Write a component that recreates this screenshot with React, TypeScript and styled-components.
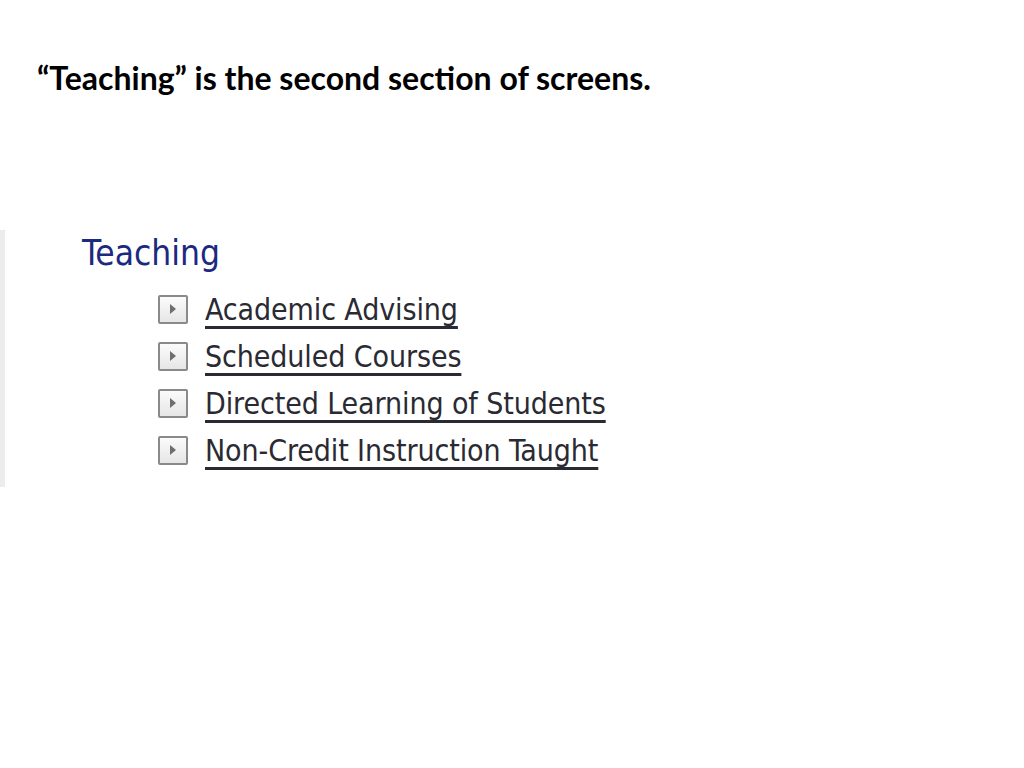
import styled, { createGlobalStyle } from "styled-components";

const GlobalStyle = createGlobalStyle`
  body {
    margin: 0;
    background: #ffffff;
  }
`;

const Page = styled.div`
  width: 1024px;
  height: 768px;
  display: flex;
  flex-direction: column;
`;

const Caption = styled.h1`
  margin: 0;
  padding: 58px 0 0 37px;
  font-family: Lato, "Liberation Sans", sans-serif;
  font-weight: 700;
  font-size: 32px;
  line-height: 40px;
  color: #000;
`;

const Shot = styled.section`
  margin-top: 132px;
  height: 257px;
  border-left: 5px solid #ececec;
  padding: 3px 0 0 77px;
  box-sizing: border-box;
`;

const Heading = styled.h2`
  margin: 0 0 18px;
  font-family: "DejaVu Sans Condensed", "DejaVu Sans", sans-serif;
  font-weight: 400;
  font-size: 35px;
  line-height: 40px;
  color: #1b2a80;
`;

const List = styled.ul`
  list-style: none;
  margin: 0;
  padding: 0 0 0 76px;
  display: flex;
  flex-direction: column;
  gap: 11px;
`;

const Item = styled.li`
  display: flex;
  align-items: center;
  gap: 17px;
  height: 36px;
`;

const Toggle = styled.span`
  width: 26px;
  height: 25px;
  border: 2px solid #8a8a8a;
  border-radius: 2px;
  background: linear-gradient(#fbfbfb, #e6e6e6);
  display: flex;
  align-items: center;
  justify-content: center;
`;

const Arrow = styled.span`
  width: 0;
  height: 0;
  border-top: 5px solid transparent;
  border-bottom: 5px solid transparent;
  border-left: 6px solid #6e6e6e;
`;

const Link = styled.a`
  font-family: "DejaVu Sans Condensed", "DejaVu Sans", sans-serif;
  font-size: 30px;
  letter-spacing: -0.1px;
  color: #2a2a33;
  text-decoration: underline;
  text-decoration-thickness: 3px;
  text-underline-offset: 6px;
  text-decoration-skip-ink: none;
`;

const items = [
  "Academic Advising",
  "Scheduled Courses",
  "Directed Learning of Students",
  "Non-Credit Instruction Taught",
];

export default function App() {
  return (
    <>
      <GlobalStyle />
      <Page>
        <Caption>“Teaching” is the second section of screens.</Caption>
        <Shot>
          <Heading>Teaching</Heading>
          <List>
            {items.map((label) => (
              <Item key={label}>
                <Toggle>
                  <Arrow />
                </Toggle>
                <Link href="#">{label}</Link>
              </Item>
            ))}
          </List>
        </Shot>
      </Page>
    </>
  );
}
